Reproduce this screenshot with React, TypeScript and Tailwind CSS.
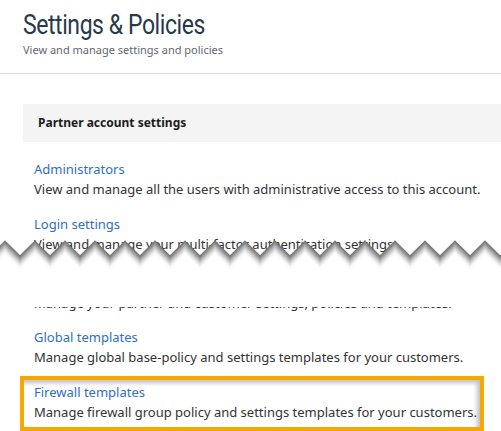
const items = [
  {
    title: "Administrators",
    desc: "View and manage all the users with administrative access to this account.",
  },
];

// saw-tooth tear: white below the edge with a soft grey shadow under it
function TornEdge() {
  const pts: string[] = [];
  for (let x = -25; x <= 530; x += 15) {
    const k = Math.round((x - 5) / 15);
    pts.push(`${x},${k % 2 === 0 ? 1 : 16}`);
  }
  const line = pts.join(" ");
  const fill = `${line} 530,40 -25,40`;
  const layers = Array.from({ length: 14 }, (_, i) => i);
  return (
    <svg
      width="501"
      height="34"
      viewBox="0 0 501 34"
      className="absolute left-[-34px] top-[6px]"
    >
      <polygon points={fill} fill="#ffffff" />
      {layers.map((i) => (
        <polyline
          key={i}
          points={line}
          transform={`translate(0 ${i})`}
          fill="none"
          stroke="#5e5e5e"
          strokeOpacity={0.75 * (1 - i / 14) * (1 - i / 14)}
          strokeWidth={1.2}
        />
      ))}
    </svg>
  );
}

function Item({ title, desc }: { title: string; desc: string }) {
  return (
    <div>
      <a className="block text-[13px] leading-5 text-[#2f6fc4]">{title}</a>
      <p className="text-[13px] leading-5 text-[#333] whitespace-nowrap">{desc}</p>
    </div>
  );
}

export default function App() {
  return (
    <div
      className="w-[501px] h-[431px] overflow-hidden bg-white"
      style={{ fontFamily: "'Noto Sans', Roboto, sans-serif" }}
    >
      <header className="pl-[23px] pt-2 pb-[15px] border-b border-[#dcdcdc]">
        <h1
          className="origin-left scale-x-[0.82] text-[28px] leading-[34px] tracking-[-0.5px] text-[#27394b]"
          style={{ fontFamily: "Roboto, sans-serif" }}
        >
          Settings &amp; Policies
        </h1>
        <p className="text-[11px] leading-4 text-[#5f6873]">View and manage settings and policies</p>
      </header>

      <section className="pl-[23px] mt-[30px]">
        <div className="h-[38px] bg-[#f4f4f4] flex items-center pl-[15px]">
          <h2 className="text-[12px] font-bold text-[#1c1c1c]">Partner account settings</h2>
        </div>

        <div className="pl-[11px] mt-[17px] flex flex-col gap-[15px]">
          {items.map((it) => (
            <Item key={it.title} {...it} />
          ))}

          <div>
            <a className="block text-[13px] leading-5 text-[#2f6fc4]">Login settings</a>
            <div className="relative">
              <p className="text-[13px] leading-5 text-[#333] whitespace-nowrap">
                View and manage your multi-factor authentication settings.
              </p>
              <TornEdge />
            </div>
            {/* lower edge of the line that follows the tear */}
            <div className="mt-[53px] h-[5px] overflow-hidden">
              <p className="-mt-[14px] text-[13px] leading-5 text-[#333] whitespace-nowrap">
                Manage your partner and customer settings, policies and templates.
              </p>
            </div>
          </div>

          <Item
            title="Global templates"
            desc="Manage global base-policy and settings templates for your customers."
          />

          <div className="-ml-[14px] -mt-[6px] w-[464px] border-4 border-[#f6a800] pl-[10px] pt-[2px] pb-[5px] shadow-[inset_-3px_3px_4px_rgba(0,0,0,0.25)]">
            <Item
              title="Firewall templates"
              desc="Manage firewall group policy and settings templates for your customers."
            />
          </div>
        </div>
      </section>
    </div>
  );
}
